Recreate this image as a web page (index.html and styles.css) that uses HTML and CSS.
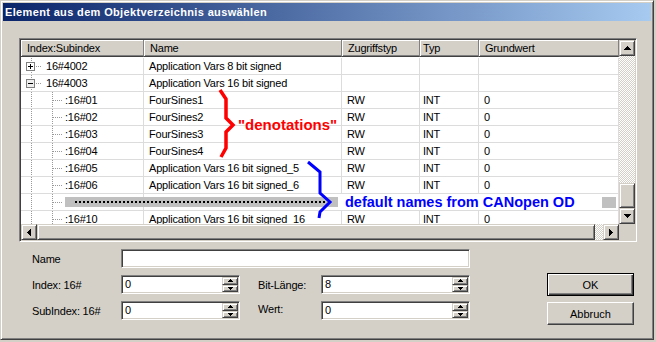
FILE: index.html
```html
<!DOCTYPE html>
<html lang="de">
<head>
  <meta charset="UTF-8" />
  <title>Element aus dem Objektverzeichnis auswählen</title>
  <link rel="stylesheet" href="styles.css">
</head>
<body>
  <div class="window">
    <div class="titlebar">Element aus dem Objektverzeichnis auswählen</div>
    <div class="content">
      <div class="listframe">
        <div class="list">
          <div class="table">
            <div class="head">
              <div class="hcell c1">Index:Subindex</div>
              <div class="hcell c2">Name</div>
              <div class="hcell c3">Zugriffstyp</div>
              <div class="hcell c4">Typ</div>
              <div class="hcell c5">Grundwert</div>
            </div>
            <div class="rows">
              <div class="row">
                <div class="cell c1 idx">
                  <svg class="exp" width="9" height="9" viewBox="0 0 9 9"><rect x="0.5" y="0.5" width="8" height="8" fill="#fff" stroke="#808080"/><path d="M2 4h5v1H2zM4 2h1v5H4z" fill="#000"/></svg>
                  <span class="stub"></span>16#4002
                </div>
                <div class="cell c2">Application Vars 8 bit signed</div>
                <div class="cell c3"></div>
                <div class="cell c4"></div>
                <div class="cell c5"></div>
              </div>
              <div class="row">
                <div class="cell c1 idx">
                  <svg class="exp" width="9" height="9" viewBox="0 0 9 9"><rect x="0.5" y="0.5" width="8" height="8" fill="#eeeeee" stroke="#808080"/><path d="M2 4h5v1H2z" fill="#000"/></svg>
                  <span class="stub"></span>16#4003
                </div>
                <div class="cell c2">Application Vars 16 bit signed</div>
                <div class="cell c3"></div>
                <div class="cell c4"></div>
                <div class="cell c5"></div>
              </div>
              <div class="row">
                <div class="cell c1 idx child"><span class="stub"></span>:16#01</div>
                <div class="cell c2">FourSines1</div>
                <div class="cell c3">RW</div>
                <div class="cell c4">INT</div>
                <div class="cell c5">0</div>
              </div>
              <div class="row">
                <div class="cell c1 idx child"><span class="stub"></span>:16#02</div>
                <div class="cell c2">FourSines2</div>
                <div class="cell c3">RW</div>
                <div class="cell c4">INT</div>
                <div class="cell c5">0</div>
              </div>
              <div class="row">
                <div class="cell c1 idx child"><span class="stub"></span>:16#03</div>
                <div class="cell c2">FourSines3</div>
                <div class="cell c3">RW</div>
                <div class="cell c4">INT</div>
                <div class="cell c5">0</div>
              </div>
              <div class="row">
                <div class="cell c1 idx child"><span class="stub"></span>:16#04</div>
                <div class="cell c2">FourSines4</div>
                <div class="cell c3">RW</div>
                <div class="cell c4">INT</div>
                <div class="cell c5">0</div>
              </div>
              <div class="row">
                <div class="cell c1 idx child"><span class="stub"></span>:16#05</div>
                <div class="cell c2">Application Vars 16 bit signed_5</div>
                <div class="cell c3">RW</div>
                <div class="cell c4">INT</div>
                <div class="cell c5">0</div>
              </div>
              <div class="row">
                <div class="cell c1 idx child"><span class="stub"></span>:16#06</div>
                <div class="cell c2">Application Vars 16 bit signed_6</div>
                <div class="cell c3">RW</div>
                <div class="cell c4">INT</div>
                <div class="cell c5">0</div>
              </div>
              <div class="row">
                <div class="cell c1 idx child"><span class="stub"></span></div>
                <div class="cell c2"></div>
                <div class="cell c3"></div>
                <div class="cell c4"></div>
                <div class="cell c5"></div>
              </div>
              <div class="row">
                <div class="cell c1 idx child"><span class="stub"></span>:16#10</div>
                <div class="cell c2">Application Vars 16 bit signed_16</div>
                <div class="cell c3">RW</div>
                <div class="cell c4">INT</div>
                <div class="cell c5">0</div>
              </div>
            </div>

            <!-- hand drawn notes on top of the list -->
            <div class="notes">
              <svg class="marks" width="598" height="184" viewBox="0 0 598 184">
                <polyline points="199,50 205,59 205,78 212,85 205,92 205,108 200,117" fill="none" stroke="#ff0000" stroke-width="3.5"/>
                <rect x="44" y="157" width="273" height="10" fill="#c0c0c0"/>
                <line x1="54" y1="162" x2="304" y2="162" stroke="#000" stroke-width="2" stroke-dasharray="2 2"/>
                <polyline points="287,122 299,132 299,153 309,162 299,172 298,178" fill="none" stroke="#0000ff" stroke-width="3"/>
              </svg>
              <span class="note red">"denotations"</span>
              <span class="note blue">default names from CANopen OD</span>
              <span class="note-end"></span>
            </div>
          </div>

          <div class="vscroll">
            <div class="sbtn">
              <svg width="7" height="4" viewBox="0 0 7 4"><path d="M3 0h1v1h1v1h1v1h1v1H0V3h1V2h1V1h1z"/></svg>
            </div>
            <div class="track"></div>
            <div class="sbtn thumb-v"></div>
            <div class="sbtn">
              <svg width="7" height="4" viewBox="0 0 7 4"><path d="M0 0h7v1H6v1H5v1H4v1H3V3H2V2H1V1H0z"/></svg>
            </div>
          </div>
          <div class="hscroll">
            <div class="sbtn">
              <svg width="4" height="7" viewBox="0 0 4 7"><path d="M3 0h1v7H3V6H2V5H1V4H0V3h1V2h1V1h1z"/></svg>
            </div>
            <div class="sbtn thumb-h"></div>
            <div class="track"></div>
            <div class="sbtn">
              <svg width="4" height="7" viewBox="0 0 4 7"><path d="M0 0h1v1h1v1h1v1h1v1H3v1H2v1H1v1H0z"/></svg>
            </div>
          </div>
          <div class="corner"></div>
        </div>
      </div>

      <div class="bottom">
        <div class="fields">
          <label class="lbl">Name</label>
          <div class="edit wide"><input type="text" value=""></div>

          <label class="lbl">Index: 16#</label>
          <div class="edit">
            <input type="text" value="0">
            <div class="updown">
              <div class="ud"><svg width="5" height="3" viewBox="0 0 5 3"><path d="M2 0h1v1h1v1h1v1H0V2h1V1h1z"/></svg></div>
              <div class="ud"><svg width="5" height="3" viewBox="0 0 5 3"><path d="M0 0h5v1H4v1H3v1H2V2H1V1H0z"/></svg></div>
            </div>
          </div>
          <label class="lbl lbl2">Bit-Länge:</label>
          <div class="edit">
            <input type="text" value="8">
            <div class="updown">
              <div class="ud"><svg width="5" height="3" viewBox="0 0 5 3"><path d="M2 0h1v1h1v1h1v1H0V2h1V1h1z"/></svg></div>
              <div class="ud"><svg width="5" height="3" viewBox="0 0 5 3"><path d="M0 0h5v1H4v1H3v1H2V2H1V1H0z"/></svg></div>
            </div>
          </div>

          <label class="lbl">SubIndex: 16#</label>
          <div class="edit">
            <input type="text" value="0">
            <div class="updown">
              <div class="ud"><svg width="5" height="3" viewBox="0 0 5 3"><path d="M2 0h1v1h1v1h1v1H0V2h1V1h1z"/></svg></div>
              <div class="ud"><svg width="5" height="3" viewBox="0 0 5 3"><path d="M0 0h5v1H4v1H3v1H2V2H1V1H0z"/></svg></div>
            </div>
          </div>
          <label class="lbl lbl2 up">Wert:</label>
          <div class="edit">
            <input type="text" value="0">
            <div class="updown">
              <div class="ud"><svg width="5" height="3" viewBox="0 0 5 3"><path d="M2 0h1v1h1v1h1v1H0V2h1V1h1z"/></svg></div>
              <div class="ud"><svg width="5" height="3" viewBox="0 0 5 3"><path d="M0 0h5v1H4v1H3v1H2V2H1V1H0z"/></svg></div>
            </div>
          </div>
        </div>

        <div class="buttons">
          <button class="btn default">OK</button>
          <button class="btn">Abbruch</button>
        </div>
      </div>
    </div>
  </div>
</body>
</html>
```

FILE: styles.css
```css
* {
  margin: 0;
  padding: 0;
  box-sizing: border-box;
}

body {
  background: #d4d0c8;
  font-family: "Liberation Sans", Arial, sans-serif;
  font-size: 11px;
  letter-spacing: -0.2px;
  color: #000;
}

.window {
  width: 654px;
  height: 340px;
  border: 1px solid;
  border-color: #d4d0c8 #404040 #404040 #d4d0c8;
  box-shadow: inset 1px 1px #fff, inset -1px -1px #808080;
  padding: 2px;
}

.titlebar {
  height: 18px;
  line-height: 18px;
  padding-left: 2px;
  background: linear-gradient(to right, #0a246a, #a6caf0);
  color: #fff;
  font-weight: bold;
  letter-spacing: 0.35px;
}

.content {
  padding: 17px 0 0 16px;
}

/* sunken frame around the tree list */
.listframe {
  width: 618px;
  height: 204px;
  border: 1px solid;
  border-color: #808080 #fff #fff #808080;
  box-shadow: inset 1px 1px #404040, inset -1px -1px #d4d0c8;
  padding: 1px;
}

.list {
  display: grid;
  grid-template-columns: 598px 16px;
  grid-template-rows: 184px 16px;
}

.table {
  position: relative;
  overflow: hidden;
  background: #fff;
}

.head {
  display: flex;
  height: 17px;
  margin-bottom: 1px;
}

.hcell {
  background: #d4d0c8;
  border-right: 1px solid #808080;
  border-bottom: 1px solid #404040;
  box-shadow: inset 1px 1px #fff, inset 0 -1px #808080;
  padding-left: 6px;
  line-height: 16px;
  white-space: nowrap;
}

.c1 { width: 123px; }
.c2 { width: 198px; }
.c3 { width: 78px; }
.c4 { width: 59px; }
.c5 { width: 140px; }

.row {
  display: flex;
  height: 17px;
  border-bottom: 1px solid #dcdcdc;
}

.cell {
  border-right: 1px solid #dcdcdc;
  padding-left: 5px;
  line-height: 16px;
  white-space: nowrap;
  overflow: hidden;
}

.hcell.c4 { padding-left: 3px; }
.cell.c4 { padding-left: 3px; }

/* tree lines */
.idx {
  display: flex;
  align-items: center;
  padding-left: 5px;
  background: linear-gradient(#999 50%, transparent 50%) 10px 0 / 1px 2px repeat-y;
}

.idx.child {
  padding-left: 32px;
  background:
    linear-gradient(#999 50%, transparent 50%) 10px 0 / 1px 2px repeat-y,
    linear-gradient(#999 50%, transparent 50%) 31px 0 / 1px 2px repeat-y;
}

.exp {
  display: block;
  flex: none;
}

.stub {
  flex: none;
  width: 6px;
  height: 1px;
  margin: 0 4px 0 1px;
  background: linear-gradient(to right, #999 50%, transparent 50%) 0 0 / 2px 1px repeat-x;
}

.child .stub {
  width: 10px;
  margin: 0 2px 0 0;
}

/* annotations */
.notes {
  position: absolute;
  left: 0;
  top: 0;
  width: 598px;
  height: 184px;
}

.marks {
  position: absolute;
  left: 0;
  top: 0;
}

.note {
  position: absolute;
  font-weight: bold;
  letter-spacing: 0;
  white-space: nowrap;
}

.red {
  left: 217px;
  top: 76px;
  line-height: 18px;
  font-size: 15px;
  color: #ff0000;
}

.blue {
  left: 317px;
  top: 154px;
  width: 264px;
  height: 16px;
  padding-left: 7px;
  line-height: 16px;
  font-size: 14.5px;
  color: #0000ff;
  background: #fff;
}

.note-end {
  position: absolute;
  left: 581px;
  top: 157px;
  width: 14px;
  height: 11px;
  background: #c0c0c0;
}

/* scrollbars */
.sbtn {
  display: flex;
  align-items: center;
  justify-content: center;
  width: 16px;
  height: 16px;
  flex: none;
  background: #d4d0c8;
  border: 1px solid;
  border-color: #d4d0c8 #404040 #404040 #d4d0c8;
  box-shadow: inset 1px 1px #fff, inset -1px -1px #808080;
}

.sbtn svg {
  display: block;
  fill: #000;
}

.track {
  flex: 1;
  background: repeating-conic-gradient(#fff 0 25%, #d4d0c8 0 50%) 0 0 / 2px 2px;
}

.vscroll {
  display: flex;
  flex-direction: column;
}

.thumb-v { height: 25px; }

.hscroll {
  display: flex;
}

.thumb-h { width: 558px; }

.hscroll .track { flex: none; width: 8px; }

.corner {
  background: #d4d0c8;
}

/* lower part */
.bottom {
  display: flex;
  margin-top: 7px;
  padding-left: 13px;
}

.fields {
  display: grid;
  grid-template-columns: 89px 119px 81px 149px;
  grid-template-rows: 19px 19px 19px;
  row-gap: 7px;
}

.lbl {
  line-height: 20px;
  white-space: nowrap;
}

.lbl2 { padding-left: 18px; }
.lbl.up { line-height: 16px; }

.edit {
  display: flex;
  background: #fff;
  border: 1px solid;
  border-color: #808080 #fff #fff #808080;
  box-shadow: inset 1px 1px #404040, inset -1px -1px #d4d0c8;
  padding: 1px;
}

.edit.wide { grid-column: 2 / 5; }

.edit input {
  flex: 1;
  min-width: 0;
  border: none;
  outline: none;
  background: transparent;
  padding-left: 2px;
  font: inherit;
  line-height: 15px;
}

.updown {
  display: flex;
  flex-direction: column;
  width: 16px;
}

.ud {
  display: flex;
  align-items: center;
  justify-content: center;
  flex: 1;
  background: #d4d0c8;
  border: 1px solid;
  border-color: #d4d0c8 #404040 #404040 #d4d0c8;
  box-shadow: inset 1px 1px #fff, inset -1px -1px #808080;
}

.ud svg {
  display: block;
  fill: #000;
}

.buttons {
  display: flex;
  flex-direction: column;
  gap: 6px;
  margin-left: 77px;
  padding-top: 24px;
}

.btn {
  width: 87px;
  height: 23px;
  background: #d4d0c8;
  border: 1px solid;
  border-color: #fff #404040 #404040 #fff;
  box-shadow: inset -1px -1px #808080;
  font: inherit;
  color: #000;
}

.btn.default {
  border: 1px solid #000;
  box-shadow: inset 1px 1px #fff, inset -1px -1px #404040, inset -2px -2px #808080;
}
```
